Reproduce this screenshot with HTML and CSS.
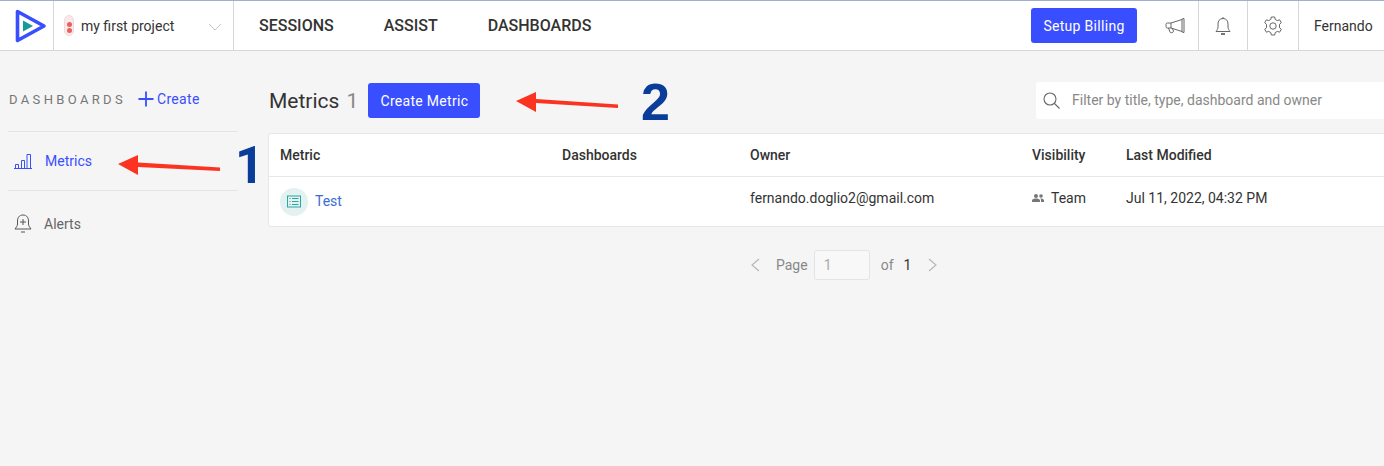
FILE: index.html
```html
<!DOCTYPE html>
<html lang="en">
<head>
<meta charset="utf-8">
<title>Metrics</title>
<link rel="stylesheet" href="styles.css">
</head>
<body>
<header class="topbar">
  <div class="logo-cell">
    <svg width="32" height="34" viewBox="0 0 32 34"><path d="M2.500 2.500 L29 17 L2.500 31.500 Z" fill="none" stroke="#394eff" stroke-width="3.600" stroke-linejoin="round"/><path d="M8 11.500 L18 17 L8 22.500 Z" fill="#189a98"/></svg>
  </div>
  <div class="project-cell">
    <span class="status"><i></i><i></i></span>
    <span class="project-name">my first project</span>
    <svg class="project-caret" width="14" height="8" viewBox="0 0 14 8"><path d="M1 1 L7 7 L13 1" fill="none" stroke="#c4c4c4" stroke-width="1"/></svg>
  </div>
  <nav class="nav">
    <a class="nav-link nav-sessions">SESSIONS</a>
    <a class="nav-link nav-assist">ASSIST</a>
    <a class="nav-link">DASHBOARDS</a>
  </nav>
  <div class="top-right">
    <button class="btn btn-billing">Setup Billing</button>
    <div class="icon-cell cell-announce">
      <svg width="20" height="18" viewBox="0 0 20 18" fill="none" stroke="#666" stroke-width="1"><path d="M19 1.500 V15.500 L17 15 V2 Z M17 2.500 L6 6 H2.500 Q1 6 1 7.500 V9.500 Q1 11 2.500 11 H6 L17 14.500 M6 6 V11 M3.500 11 L5 15 Q5.300 16 6.500 15.700 L8 15.200 Q8.800 14.800 8.400 14 L7.300 11.400"/></svg>
    </div>
    <div class="icon-cell cell-bell">
      <svg width="16" height="20" viewBox="0 0 16 20" fill="none" stroke="#666" stroke-width="1"><path d="M8 1 V2.500 M8 2.500 C4.500 2.500 3 5 3 8 V11 C3 13 2 14 1 15.500 H15 C14 14 13 13 13 11 V8 C13 5 11.500 2.500 8 2.500 Z"/><path d="M6 18 H10" stroke-width="1.800"/></svg>
    </div>
    <div class="icon-cell cell-gear">
      <svg width="20" height="20" viewBox="0 0 20 20" fill="none" stroke="#666" stroke-width="1"><circle cx="10" cy="10" r="3.200"/><path d="M8.300 1 H11.700 L12.200 3.400 L14.300 4.600 L16.600 3.800 L18.300 6.700 L16.500 8.300 V11.700 L18.300 13.300 L16.600 16.200 L14.300 15.400 L12.200 16.600 L11.700 19 H8.300 L7.800 16.600 L5.700 15.400 L3.400 16.200 L1.700 13.300 L3.500 11.700 V8.300 L1.700 6.700 L3.400 3.800 L5.700 4.600 L7.800 3.400 Z" stroke-linejoin="round"/></svg>
    </div>
    <div class="user-cell">Fernando</div>
  </div>
</header>

<div class="page">
  <aside class="sidebar">
    <div class="side-head">
      <span class="side-title">DASHBOARDS</span>
      <a class="create-link">
        <svg width="16" height="16" viewBox="0 0 16 16"><path d="M8 0.500 V15.500 M0.500 8 H15.500" stroke="#394eff" stroke-width="1.800"/></svg>
        <span>Create</span>
      </a>
    </div>
    <div class="side-item side-metrics">
      <svg width="18" height="16" viewBox="0 0 18 16" fill="none" stroke="#394eff" stroke-width="1"><path d="M0 15.500 H18 M1.500 15.500 V11.500 H4.500 V15.500 M7.500 15.500 V7.500 H10.500 V15.500 M13 15.500 V1.500 H16.500 V15.500"/></svg>
      <span>Metrics</span>
    </div>
    <div class="side-item side-alerts">
      <svg width="18" height="20" viewBox="0 0 18 20" fill="none" stroke="#555" stroke-width="1"><path d="M9 1 C5 1 3.500 4 3.500 7 V10 C3.500 12 2 13.500 1 15 H17 C16 13.500 14.500 12 14.500 10 V7 C14.500 4 13 1 9 1 Z M9 5 V11 M6 8 H12 M7 18 H11"/></svg>
      <span>Alerts</span>
    </div>
  </aside>

  <main class="main">
    <div class="main-head">
      <h1 class="title">Metrics <span class="count">1</span></h1>
      <button class="btn btn-create">Create Metric</button>
      <div class="search">
        <svg width="17" height="17" viewBox="0 0 17 17" fill="none" stroke="#666" stroke-width="1.100"><circle cx="7" cy="7" r="6"/><path d="M11.500 11.500 L16.500 16.500"/></svg>
        <span class="search-text">Filter by title, type, dashboard and owner</span>
      </div>
    </div>

    <section class="card">
      <div class="row row-head">
        <div>Metric</div><div>Dashboards</div><div>Owner</div><div>Visibility</div><div>Last Modified</div>
      </div>
      <div class="row row-body">
        <div class="metric-name">
          <span class="metric-icon">
            <svg width="14" height="13" viewBox="0 0 14 13" fill="none" stroke="#2ba5a5" stroke-width="1"><rect x="0.500" y="1" width="13" height="11"/><path d="M2.500 3.500 H3.500 M5 3.500 H11.500 M2.500 6.500 H3.500 M5 6.500 H11.500 M2.500 9.500 H3.500 M5 9.500 H11.500"/></svg>
          </span>
          <a class="metric-link">Test</a>
        </div>
        <div></div>
        <div class="cell-up">fernando.doglio2@gmail.com</div>
        <div class="cell-up team">
          <svg width="12" height="8" viewBox="0 0 12 8" fill="#777"><circle cx="4" cy="2" r="2"/><circle cx="9" cy="2" r="1.800"/><path d="M0 8 V6.500 C0 5 2.500 4.500 4 4.500 C5.500 4.500 8 5 8 6.500 V8 Z M8.800 4.500 C10 4.500 12 5 12 6.500 V8 H9 V6.500 C9 5.500 8.800 5 8 4.600 Z"/></svg>
          <span>Team</span>
        </div>
        <div class="cell-up">Jul 11, 2022, 04:32 PM</div>
      </div>
    </section>

    <div class="pager">
      <svg width="10" height="14" viewBox="0 0 10 14" fill="none" stroke="#b5b5b5" stroke-width="1.100"><path d="M9 1 L2 7 L9 13"/></svg>
      <span class="pager-page">Page</span>
      <span class="pager-input">1</span>
      <span class="pager-of">of</span>
      <span class="pager-total">1</span>
      <svg class="pager-next" width="10" height="14" viewBox="0 0 10 14" fill="none" stroke="#b5b5b5" stroke-width="1.100"><path d="M1 1 L8 7 L1 13"/></svg>
    </div>
  </main>
</div>

<svg class="arrow arrow-one" width="104" height="24" viewBox="0 0 104 24"><path d="M102 14.500 L20 9.500 L20 2 L0 11 L20 22 L20 14 L102 18 Z" fill="#fb3321"/></svg>
<svg class="arrow arrow-two" width="104" height="22" viewBox="0 0 104 22"><path d="M102 13.500 L20 8 L20 1 L0 10 L20 21 L20 12 L102 17 Z" fill="#fb3321"/></svg>
<span class="callout callout-one">1</span>
<span class="callout callout-two">2</span>
</body>
</html>
```

FILE: styles.css
```css
* { box-sizing: border-box; }

html, body {
  margin: 0;
  height: 100%;
  overflow: hidden;
}

body {
  position: relative;
  background: #f5f5f5;
  font-family: Roboto, "Liberation Sans", sans-serif;
  font-size: 14px;
  color: #2b2b2b;
}

svg { display: block; flex: none; }

.topbar {
  display: flex;
  height: 51px;
  background: #fff;
  border-top: 1px solid #9fb0cf;
  border-bottom: 1px solid #d6d6d6;
}

.logo-cell {
  width: 54px;
  display: flex;
  align-items: center;
  padding-left: 15px;
  border-right: 1px solid #d6d6d6;
}

.project-cell {
  width: 180px;
  display: flex;
  align-items: center;
  padding-left: 10px;
  border-right: 1px solid #d6d6d6;
}

.status {
  width: 10px;
  height: 21px;
  border-radius: 5px;
  background: #fbe9e9;
  border: 1px solid #eedcdc;
  display: flex;
  flex-direction: column;
  align-items: center;
  justify-content: flex-end;
  gap: 1px;
  padding-bottom: 2px;
}

.status i {
  width: 5px;
  height: 5px;
  border-radius: 50%;
  background: #e8605f;
}

.project-name {
  margin-left: 7px;
  font-size: 14px;
  color: #333;
}

.project-caret { margin-left: 34px; margin-top: 2px; }

.nav {
  display: flex;
  align-items: center;
  padding-left: 25px;
}

.nav-link {
  font-size: 16px;
  font-weight: 500;
  color: #333;
}

.nav-sessions { margin-right: 50px; }
.nav-assist { margin-right: 50px; }

.top-right {
  margin-left: auto;
  display: flex;
  align-items: stretch;
}

.btn {
  border: 0;
  border-radius: 3px;
  background: #394eff;
  color: #fff;
  font-family: inherit;
  font-size: 14px;
  letter-spacing: 0.300px;
}

.btn-billing {
  width: 106px;
  height: 35px;
  align-self: center;
  margin-right: 28px;
  padding: 0;
}

.icon-cell {
  display: flex;
  align-items: center;
  justify-content: center;
}

.cell-announce { width: 34px; justify-content: flex-start; border-right: 1px solid #d6d6d6; }
.cell-bell { width: 49px; border-right: 1px solid #d6d6d6; }
.cell-gear { width: 51px; border-right: 1px solid #d6d6d6; }

.user-cell {
  width: 85px;
  display: flex;
  align-items: center;
  padding-left: 15px;
  font-size: 14px;
  color: #333;
}

.page {
  display: flex;
  align-items: flex-start;
}

.sidebar {
  width: 230px;
  margin-left: 8px;
  flex: none;
  padding-top: 39px;
}

.side-head {
  display: flex;
  align-items: center;
  height: 18px;
  margin-bottom: 23px;
}

.side-title {
  font-size: 13px;
  letter-spacing: 3.350px;
  color: #777;
  padding-left: 1px;
}

.create-link {
  margin-left: 12px;
  display: flex;
  align-items: center;
  gap: 3px;
  color: #394eff;
  font-size: 14px;
  letter-spacing: 0.300px;
}

.side-item {
  display: flex;
  align-items: center;
  gap: 12px;
  padding-left: 6px;
  font-size: 14px;
}

.side-metrics {
  height: 60px;
  gap: 13px;
  border-top: 1px solid #e4e4e4;
  border-bottom: 1px solid #e4e4e4;
  color: #394eff;
  padding-bottom: 1px;
}

.side-alerts {
  height: 66px;
  color: #666;
}

.main {
  flex: 1;
  min-width: 0;
  margin-left: 30px;
  padding-top: 31px;
}

.main-head {
  display: flex;
  align-items: center;
  height: 37px;
  margin-bottom: 14px;
}

.title {
  margin: 0 0 0 1px;
  font-size: 21px;
  font-weight: 400;
  color: #333;
}

.count {
  margin-left: 2px;
  color: #888;
}

.btn-create {
  width: 112px;
  height: 35px;
  margin-left: 10px;
  padding: 0;
}

.search {
  margin-left: auto;
  width: 348px;
  height: 37px;
  background: #fff;
  border-radius: 3px 0 0 3px;
  display: flex;
  align-items: center;
  gap: 12px;
  padding-left: 7px;
  font-size: 14px;
  color: #888;
}

.search-text { margin-bottom: 2px; }

.card {
  margin-right: -4px;
  background: #fff;
  border: 1px solid #e7e7e7;
  border-radius: 3px;
}

.row {
  display: grid;
  grid-template-columns: 282px 188px 282px 94px 1fr;
  padding-left: 11px;
}

.row-head {
  height: 43px;
  align-items: center;
  font-weight: 500;
  color: #333;
  border-bottom: 1px solid #e7e7e7;
}

.row-body {
  height: 49px;
  align-items: center;
  color: #333;
}

.metric-name {
  display: flex;
  align-items: center;
  gap: 7px;
}

.metric-icon {
  width: 28px;
  height: 28px;
  border-radius: 50%;
  background: #e4f1f1;
  display: flex;
  align-items: center;
  justify-content: center;
}

.metric-link {
  color: #3a6bd6;
  margin-bottom: 1px;
}

.cell-up { margin-bottom: 8px; }

.team {
  display: flex;
  align-items: center;
  gap: 7px;
}

.pager {
  display: flex;
  align-items: center;
  margin-top: 23px;
  margin-left: 482px;
  height: 30px;
  font-size: 14px;
  color: #888;
}

.pager-page { margin-left: 16px; }

.pager-input {
  width: 56px;
  height: 30px;
  margin-left: 6px;
  padding-left: 9px;
  border: 1px solid #e4e4e4;
  border-radius: 3px;
  background: #f8f8f8;
  color: #aaa;
  display: flex;
  align-items: center;
}

.pager-of { margin-left: 11px; }
.pager-total { margin-left: 10px; color: #333; }
.pager-next { margin-left: 17px; }

.arrow { position: absolute; }
.arrow-one { left: 118px; top: 153px; }
.arrow-two { left: 516px; top: 91px; }

.callout {
  position: absolute;
  font-weight: 700;
  line-height: 1;
  color: #0a3d9a;
}

.callout-one {
  left: 235px;
  top: 140px;
  font-family: Roboto, sans-serif;
  font-size: 51px;
}

.callout-two {
  left: 641px;
  top: 76px;
  font-family: "Liberation Sans", Arial, sans-serif;
  font-size: 52px;
}
```
